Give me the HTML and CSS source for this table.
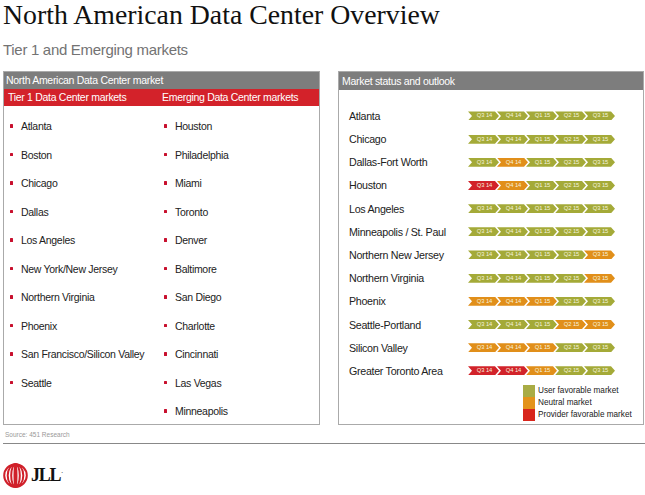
FILE: index.html
```html
<!DOCTYPE html>
<html lang="en">
<head>
<meta charset="utf-8">
<title>North American Data Center Overview</title>
<link rel="stylesheet" href="styles.css">
</head>
<body>
<h1 class="title">North American Data Center Overview</h1>
<p class="subtitle">Tier 1 and Emerging markets</p>

<div class="panels">
  <section class="panel panel-left">
    <div class="panel-head">North American Data Center market</div>
    <div class="red-bar">
      <span>Tier 1 Data Center markets</span>
      <span>Emerging Data Center markets</span>
    </div>
    <div class="cols">
      <ul class="list">
        <li>Atlanta</li>
        <li>Boston</li>
        <li>Chicago</li>
        <li>Dallas</li>
        <li>Los Angeles</li>
        <li>New York/New Jersey</li>
        <li>Northern Virginia</li>
        <li>Phoenix</li>
        <li>San Francisco/Silicon Valley</li>
        <li>Seattle</li>
      </ul>
      <ul class="list">
        <li>Houston</li>
        <li>Philadelphia</li>
        <li>Miami</li>
        <li>Toronto</li>
        <li>Denver</li>
        <li>Baltimore</li>
        <li>San Diego</li>
        <li>Charlotte</li>
        <li>Cincinnati</li>
        <li>Las Vegas</li>
        <li>Minneapolis</li>
      </ul>
    </div>
  </section>

  <section class="panel panel-right">
    <div class="panel-head">Market status and outlook</div>
    <div class="rows">
      <div class="row"><span class="label">Atlanta</span><div class="chevs"><span class="chev g">Q3 14</span><span class="chev g">Q4 14</span><span class="chev g">Q1 15</span><span class="chev g">Q2 15</span><span class="chev g">Q3 15</span></div></div>
      <div class="row"><span class="label">Chicago</span><div class="chevs"><span class="chev g">Q3 14</span><span class="chev g">Q4 14</span><span class="chev g">Q1 15</span><span class="chev g">Q2 15</span><span class="chev g">Q3 15</span></div></div>
      <div class="row"><span class="label">Dallas-Fort Worth</span><div class="chevs"><span class="chev g">Q3 14</span><span class="chev o">Q4 14</span><span class="chev g">Q1 15</span><span class="chev g">Q2 15</span><span class="chev g">Q3 15</span></div></div>
      <div class="row"><span class="label">Houston</span><div class="chevs"><span class="chev r">Q3 14</span><span class="chev o">Q4 14</span><span class="chev g">Q1 15</span><span class="chev g">Q2 15</span><span class="chev g">Q3 15</span></div></div>
      <div class="row"><span class="label">Los Angeles</span><div class="chevs"><span class="chev g">Q3 14</span><span class="chev g">Q4 14</span><span class="chev g">Q1 15</span><span class="chev g">Q2 15</span><span class="chev g">Q3 15</span></div></div>
      <div class="row"><span class="label">Minneapolis / St. Paul</span><div class="chevs"><span class="chev g">Q3 14</span><span class="chev g">Q4 14</span><span class="chev g">Q1 15</span><span class="chev g">Q2 15</span><span class="chev g">Q3 15</span></div></div>
      <div class="row"><span class="label">Northern New Jersey</span><div class="chevs"><span class="chev g">Q3 14</span><span class="chev g">Q4 14</span><span class="chev g">Q1 15</span><span class="chev g">Q2 15</span><span class="chev o">Q3 15</span></div></div>
      <div class="row"><span class="label">Northern Virginia</span><div class="chevs"><span class="chev g">Q3 14</span><span class="chev g">Q4 14</span><span class="chev g">Q1 15</span><span class="chev g">Q2 15</span><span class="chev o">Q3 15</span></div></div>
      <div class="row"><span class="label">Phoenix</span><div class="chevs"><span class="chev o">Q3 14</span><span class="chev o">Q4 14</span><span class="chev o">Q1 15</span><span class="chev g">Q2 15</span><span class="chev g">Q3 15</span></div></div>
      <div class="row"><span class="label">Seattle-Portland</span><div class="chevs"><span class="chev g">Q3 14</span><span class="chev g">Q4 14</span><span class="chev g">Q1 15</span><span class="chev o">Q2 15</span><span class="chev o">Q3 15</span></div></div>
      <div class="row"><span class="label">Silicon Valley</span><div class="chevs"><span class="chev o">Q3 14</span><span class="chev o">Q4 14</span><span class="chev o">Q1 15</span><span class="chev g">Q2 15</span><span class="chev g">Q3 15</span></div></div>
      <div class="row"><span class="label">Greater Toronto Area</span><div class="chevs"><span class="chev r">Q3 14</span><span class="chev r">Q4 14</span><span class="chev o">Q1 15</span><span class="chev g">Q2 15</span><span class="chev g">Q3 15</span></div></div>
    </div>
    <div class="legend">
      <div class="legend-item"><span class="swatch sw-g"></span><span>User favorable market</span></div>
      <div class="legend-item"><span class="swatch sw-o"></span><span>Neutral market</span></div>
      <div class="legend-item"><span class="swatch sw-r"></span><span>Provider favorable market</span></div>
    </div>
  </section>
</div>

<div class="source">Source: 451 Research</div>
<hr class="rule">

<div class="logo">
  <svg class="logo-mark" width="25" height="25" viewBox="0 0 25 25" aria-hidden="true">
    <g fill="none" stroke="#d0202a" stroke-width="2">
      <ellipse cx="12.5" cy="12.5" rx="11.3" ry="11.3"/>
      <ellipse cx="12.5" cy="12.5" rx="7.8" ry="11.3"/>
      <ellipse cx="12.5" cy="12.5" rx="4.3" ry="11.3"/>
      <ellipse cx="12.5" cy="12.5" rx="1" ry="11.3"/>
    </g>
  </svg>
  <span class="logo-text">JLL</span><span class="logo-dot">.</span>
</div>
</body>
</html>
```

FILE: styles.css
```css
html, body {
  margin: 0;
  padding: 0;
  background: #ffffff;
}

body {
  width: 645px;
  height: 495px;
  overflow: hidden;
  font-family: "Liberation Sans", Arial, sans-serif;
  color: #1a1a1a;
}

.title {
  margin: 0;
  padding-left: 3px;
  font-family: "Liberation Serif", "Times New Roman", serif;
  font-weight: normal;
  font-size: 27.8px;
  line-height: 30px;
  color: #111111;
}

.subtitle {
  margin: 10.8px 0 0 0;
  padding-left: 3px;
  font-size: 15px;
  line-height: 18px;
  letter-spacing: -0.3px;
  color: #737373;
}

.panels {
  display: flex;
  gap: 18px;
  margin-top: 12.2px;
  padding-left: 3px;
}

.panel {
  box-sizing: border-box;
  height: 354px;
  border: 1px solid #aaaaaa;
}

.panel-left {
  width: 317px;
}

.panel-right {
  width: 306px;
}

.panel-head {
  background: #7d7d7d;
  color: #ffffff;
  font-size: 10.5px;
  letter-spacing: -0.3px;
  height: 17px;
  line-height: 17px;
  padding-left: 2px;
  white-space: nowrap;
}

.panel-right .panel-head {
  height: 18px;
  line-height: 18px;
  padding-left: 3px;
}

.red-bar {
  display: grid;
  grid-template-columns: 154px 1fr;
  background: #d3222a;
  color: #ffffff;
  font-size: 10.5px;
  letter-spacing: -0.3px;
  height: 17px;
  line-height: 17px;
  padding-left: 4px;
  white-space: nowrap;
}

.cols {
  display: grid;
  grid-template-columns: 154px 1fr;
  padding-left: 4px;
  padding-top: 6px;
}

.list {
  list-style: none;
  margin: 0;
  padding: 0;
}

.list li {
  display: flex;
  align-items: center;
  height: 28.5px;
  font-size: 10.5px;
  letter-spacing: -0.3px;
  color: #222222;
  white-space: nowrap;
}

.list li::before {
  content: "";
  width: 3px;
  height: 3.5px;
  border-radius: 0.5px;
  background: #c8102e;
  margin-left: 2px;
  margin-right: 8px;
  flex: none;
}

.rows {
  padding-top: 14.4px;
}

.row {
  display: flex;
  align-items: center;
  height: 23.18px;
  padding-left: 10px;
}

.label {
  width: 119px;
  flex: none;
  font-size: 10.7px;
  letter-spacing: -0.3px;
  color: #222222;
  white-space: nowrap;
}

.chevs {
  display: flex;
}

.chev {
  width: 31px;
  height: 9px;
  margin-right: -2px;
  font-size: 5.8px;
  line-height: 9px;
  text-align: center;
  padding-left: 2px;
  box-sizing: border-box;
  color: #f4f2dc;
  letter-spacing: -0.1px;
  clip-path: polygon(0 0, calc(100% - 4px) 0, 100% 50%, calc(100% - 4px) 100%, 0 100%, 4px 50%);
}

.chev.g { background: #a4aa38; }
.chev.o { background: #e18f1a; }
.chev.r { background: #d2232a; }

.legend {
  margin-top: 2.4px;
  margin-left: 184px;
}

.legend-item {
  display: flex;
  align-items: center;
  height: 12px;
  font-size: 8.2px;
  color: #222222;
  white-space: nowrap;
}

.swatch {
  width: 12px;
  height: 12px;
  margin-right: 3px;
  flex: none;
}

.sw-g { background: #a9ac45; }
.sw-o { background: #e3931b; }
.sw-r { background: #d8261c; }

.source {
  margin-top: 5px;
  padding-left: 5px;
  font-size: 6.5px;
  line-height: 10px;
  color: #999999;
}

.rule {
  margin: 3px 0 0 3px;
  border: 0;
  border-top: 1px solid #888888;
  height: 0;
}

.logo {
  display: flex;
  align-items: center;
  margin-top: 19px;
  padding-left: 3px;
}

.logo-mark {
  flex: none;
}

.logo-text {
  margin-left: 3px;
  font-family: "Liberation Serif", "Times New Roman", serif;
  font-weight: bold;
  font-size: 18px;
  letter-spacing: -1.3px;
  color: #111111;
}

.logo-dot {
  align-self: flex-start;
  font-family: "Liberation Serif", serif;
  font-size: 7px;
  color: #111111;
  margin-left: 1px;
  margin-top: 4px;
}
```
